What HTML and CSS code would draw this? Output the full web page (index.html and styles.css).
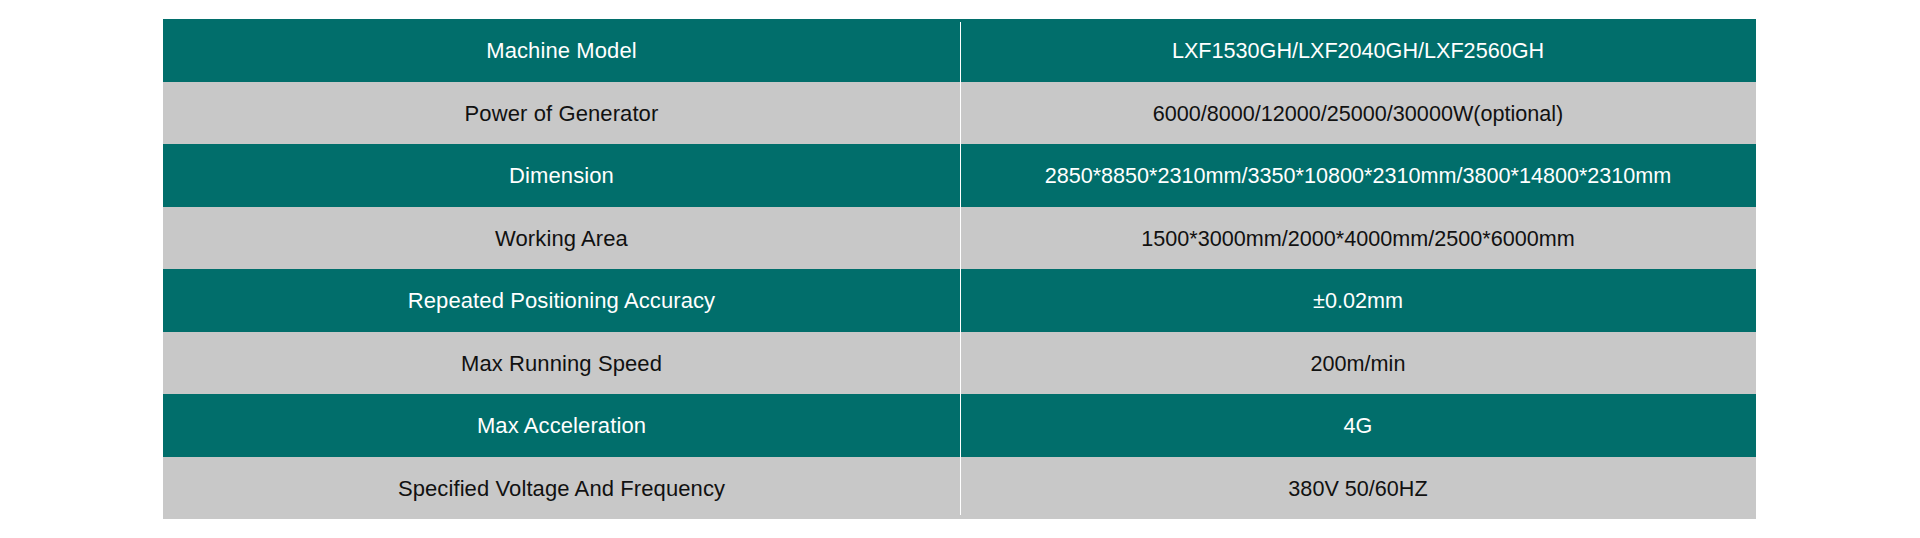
FILE: index.html
```html
<!DOCTYPE html>
<html>
<head>
<meta charset="utf-8">
<link rel="stylesheet" href="styles.css">
</head>
<body>
<div class="spec">
  <div class="row teal"><div class="cell">Machine Model</div><div class="cell value">LXF1530GH/LXF2040GH/LXF2560GH</div></div>
  <div class="row gray"><div class="cell">Power of Generator</div><div class="cell value">6000/8000/12000/25000/30000W(optional)</div></div>
  <div class="row teal"><div class="cell">Dimension</div><div class="cell value">2850*8850*2310mm/3350*10800*2310mm/3800*14800*2310mm</div></div>
  <div class="row gray"><div class="cell">Working Area</div><div class="cell value">1500*3000mm/2000*4000mm/2500*6000mm</div></div>
  <div class="row teal"><div class="cell">Repeated Positioning Accuracy</div><div class="cell value">±0.02mm</div></div>
  <div class="row gray"><div class="cell">Max Running Speed</div><div class="cell value">200m/min</div></div>
  <div class="row teal"><div class="cell">Max Acceleration</div><div class="cell value">4G</div></div>
  <div class="row gray"><div class="cell">Specified Voltage And Frequency</div><div class="cell value">380V 50/60HZ</div></div>
</div>
</body>
</html>
```
FILE: styles.css
```css
html, body {
  margin: 0;
  padding: 0;
  background: #ffffff;
}
body {
  font-family: "Liberation Sans", Arial, sans-serif;
}
.spec {
  position: relative;
  width: 1593px;
  margin: 19px 0 0 163px;
  display: flex;
  flex-direction: column;
}
.spec::after {
  content: "";
  position: absolute;
  left: 797px;
  top: 3px;
  bottom: 4px;
  width: 1px;
  background: #ffffff;
}
.row {
  height: 62.5px;
  display: grid;
  grid-template-columns: 797px 1fr;
  align-items: center;
}
.cell {
  text-align: center;
  font-size: 22px;
  letter-spacing: 0.1px;
  line-height: 1;
  padding-top: 2px;
}
.cell.value {
  font-size: 21.6px;
  letter-spacing: 0;
}
.teal {
  background: #016e6b;
  color: #ffffff;
}
.gray {
  background: #c8c8c8;
  color: #111111;
}
```
